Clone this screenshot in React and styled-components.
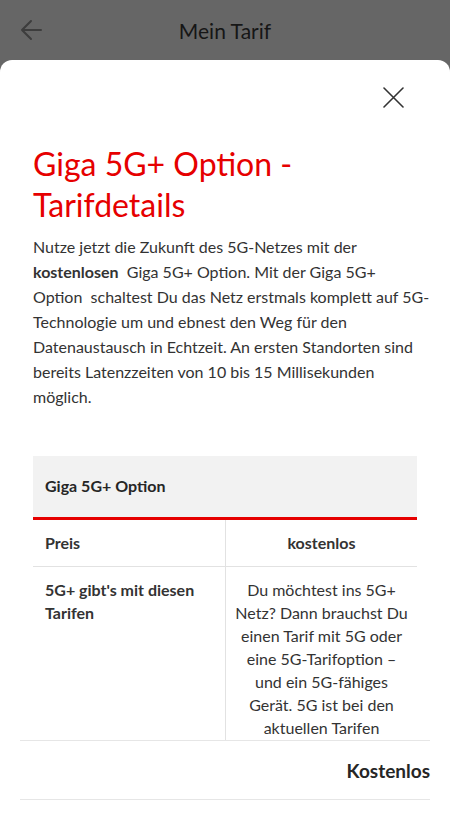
import React from "react";
import styled, { createGlobalStyle } from "styled-components";

const GlobalStyle = createGlobalStyle`
  *, *::before, *::after {
    box-sizing: border-box;
  }
  html, body {
    margin: 0;
    padding: 0;
    background: #666666;
  }
  body {
    font-family: Lato, "Liberation Sans", sans-serif;
    color: #333333;
    -webkit-font-smoothing: antialiased;
  }
`;

const Screen = styled.div`
  width: 450px;
  height: 815px;
  display: flex;
  flex-direction: column;
  background: #666666;
  overflow: hidden;
`;

const AppBar = styled.header`
  height: 60px;
  flex-shrink: 0;
  display: grid;
  grid-template-columns: 60px 1fr 60px;
  align-items: center;
`;

const BackButton = styled.button`
  border: 0;
  background: none;
  padding: 0 0 0 20px;
  height: 60px;
  display: flex;
  align-items: center;
  color: #3d3d3d;
  cursor: pointer;
`;

const AppTitle = styled.h1`
  margin: 0;
  text-align: center;
  font-size: 21px;
  font-weight: 400;
  color: #161616;
`;

const Sheet = styled.section`
  flex: 1;
  min-height: 0;
  background: #ffffff;
  border-radius: 12px 12px 0 0;
  display: flex;
  flex-direction: column;
`;

const ScrollArea = styled.div`
  flex: 1;
  min-height: 0;
  overflow: hidden;
  padding: 0 33px;
`;

const CloseRow = styled.div`
  display: flex;
  justify-content: flex-end;
  padding: 27px 13px 0 0;
`;

const CloseButton = styled.button`
  border: 0;
  background: none;
  padding: 0;
  width: 21px;
  height: 21px;
  color: #333333;
  cursor: pointer;
  svg {
    display: block;
  }
`;

const Title = styled.h2`
  margin: 35px 0 0;
  font-size: 32px;
  line-height: 41px;
  font-weight: 400;
  color: #e60000;
`;

const Intro = styled.p`
  margin: 9px 0 0;
  font-size: 16px;
  line-height: 25px;
  color: #333333;
  white-space: nowrap;
  b {
    font-weight: 700;
  }
`;

const Table = styled.div`
  margin-top: 47px;
  display: grid;
  grid-template-columns: 1fr 1fr;
`;

const HeadCell = styled.div`
  grid-column: 1 / -1;
  background: #f2f2f2;
  border-bottom: 3px solid #e60000;
  height: 64px;
  padding: 0 12px 2px;
  display: flex;
  align-items: center;
  font-size: 16px;
  font-weight: 700;
  color: #262626;
`;

const Cell = styled.div`
  padding: ${(p) => (p.$label ? "11px 12px 12px" : "11px 4px 12px")};
  font-size: 16px;
  line-height: 23px;
  color: #333333;
  white-space: ${(p) => (p.$label ? "normal" : "nowrap")};
  font-weight: ${(p) => (p.$label || p.$strong ? 700 : 400)};
  text-align: ${(p) => (p.$label ? "left" : "center")};
  border-bottom: 1.5px solid #e2e2e2;
  border-left: ${(p) => (p.$label ? "none" : "1.5px solid #e2e2e2")};
`;

const Footer = styled.footer`
  flex-shrink: 0;
  margin: 0 20px 15px;
  height: 60px;
  border-top: 1.5px solid #e6e6e6;
  border-bottom: 1.5px solid #e6e6e6;
  display: flex;
  align-items: center;
  justify-content: flex-end;
  font-size: 19px;
  font-weight: 700;
  color: #262626;
`;

const ArrowIcon = () => (
  <svg width="22" height="22" viewBox="0 0 22 22" fill="none">
    <path d="M21 11H2M11 2L2 11l9 9" stroke="currentColor" strokeWidth="2" strokeLinecap="round" strokeLinejoin="round" />
  </svg>
);

const CloseIcon = () => (
  <svg width="21" height="21" viewBox="0 0 21 21" fill="none">
    <path d="M1 1l19 19M20 1L1 20" stroke="currentColor" strokeWidth="1.6" strokeLinecap="round" />
  </svg>
);

export default function App() {
  return (
    <>
      <GlobalStyle />
      <Screen>
        <AppBar>
          <BackButton aria-label="Zurück">
            <ArrowIcon />
          </BackButton>
          <AppTitle>Mein Tarif</AppTitle>
          <span />
        </AppBar>
        <Sheet>
          <ScrollArea>
            <CloseRow>
              <CloseButton aria-label="Schließen">
                <CloseIcon />
              </CloseButton>
            </CloseRow>
            <Title>
              Giga 5G+ Option -<br />
              Tarifdetails
            </Title>
            <Intro>
              Nutze jetzt die Zukunft des 5G-Netzes mit der
              <br />
              <b>kostenlosen</b>&nbsp; Giga 5G+ Option. Mit der Giga 5G+
              <br />
              Option&nbsp; schaltest Du das Netz erstmals komplett auf 5G-
              <br />
              Technologie um und ebnest den Weg für den
              <br />
              Datenaustausch in Echtzeit. An ersten Standorten sind
              <br />
              bereits Latenzzeiten von 10 bis 15 Millisekunden
              <br />
              möglich.
            </Intro>
            <Table>
              <HeadCell>Giga 5G+ Option</HeadCell>
              <Cell $label>Preis</Cell>
              <Cell $strong>kostenlos</Cell>
              <Cell $label>5G+ gibt's mit diesen Tarifen</Cell>
              <Cell>
                Du möchtest ins 5G+
                <br />
                Netz? Dann brauchst Du
                <br />
                einen Tarif mit 5G oder
                <br />
                eine 5G-Tarifoption –
                <br />
                und ein 5G-fähiges
                <br />
                Gerät. 5G ist bei den
                <br />
                aktuellen Tarifen
                <br />
                inklusive.
              </Cell>
            </Table>
          </ScrollArea>
          <Footer>Kostenlos</Footer>
        </Sheet>
      </Screen>
    </>
  );
}
